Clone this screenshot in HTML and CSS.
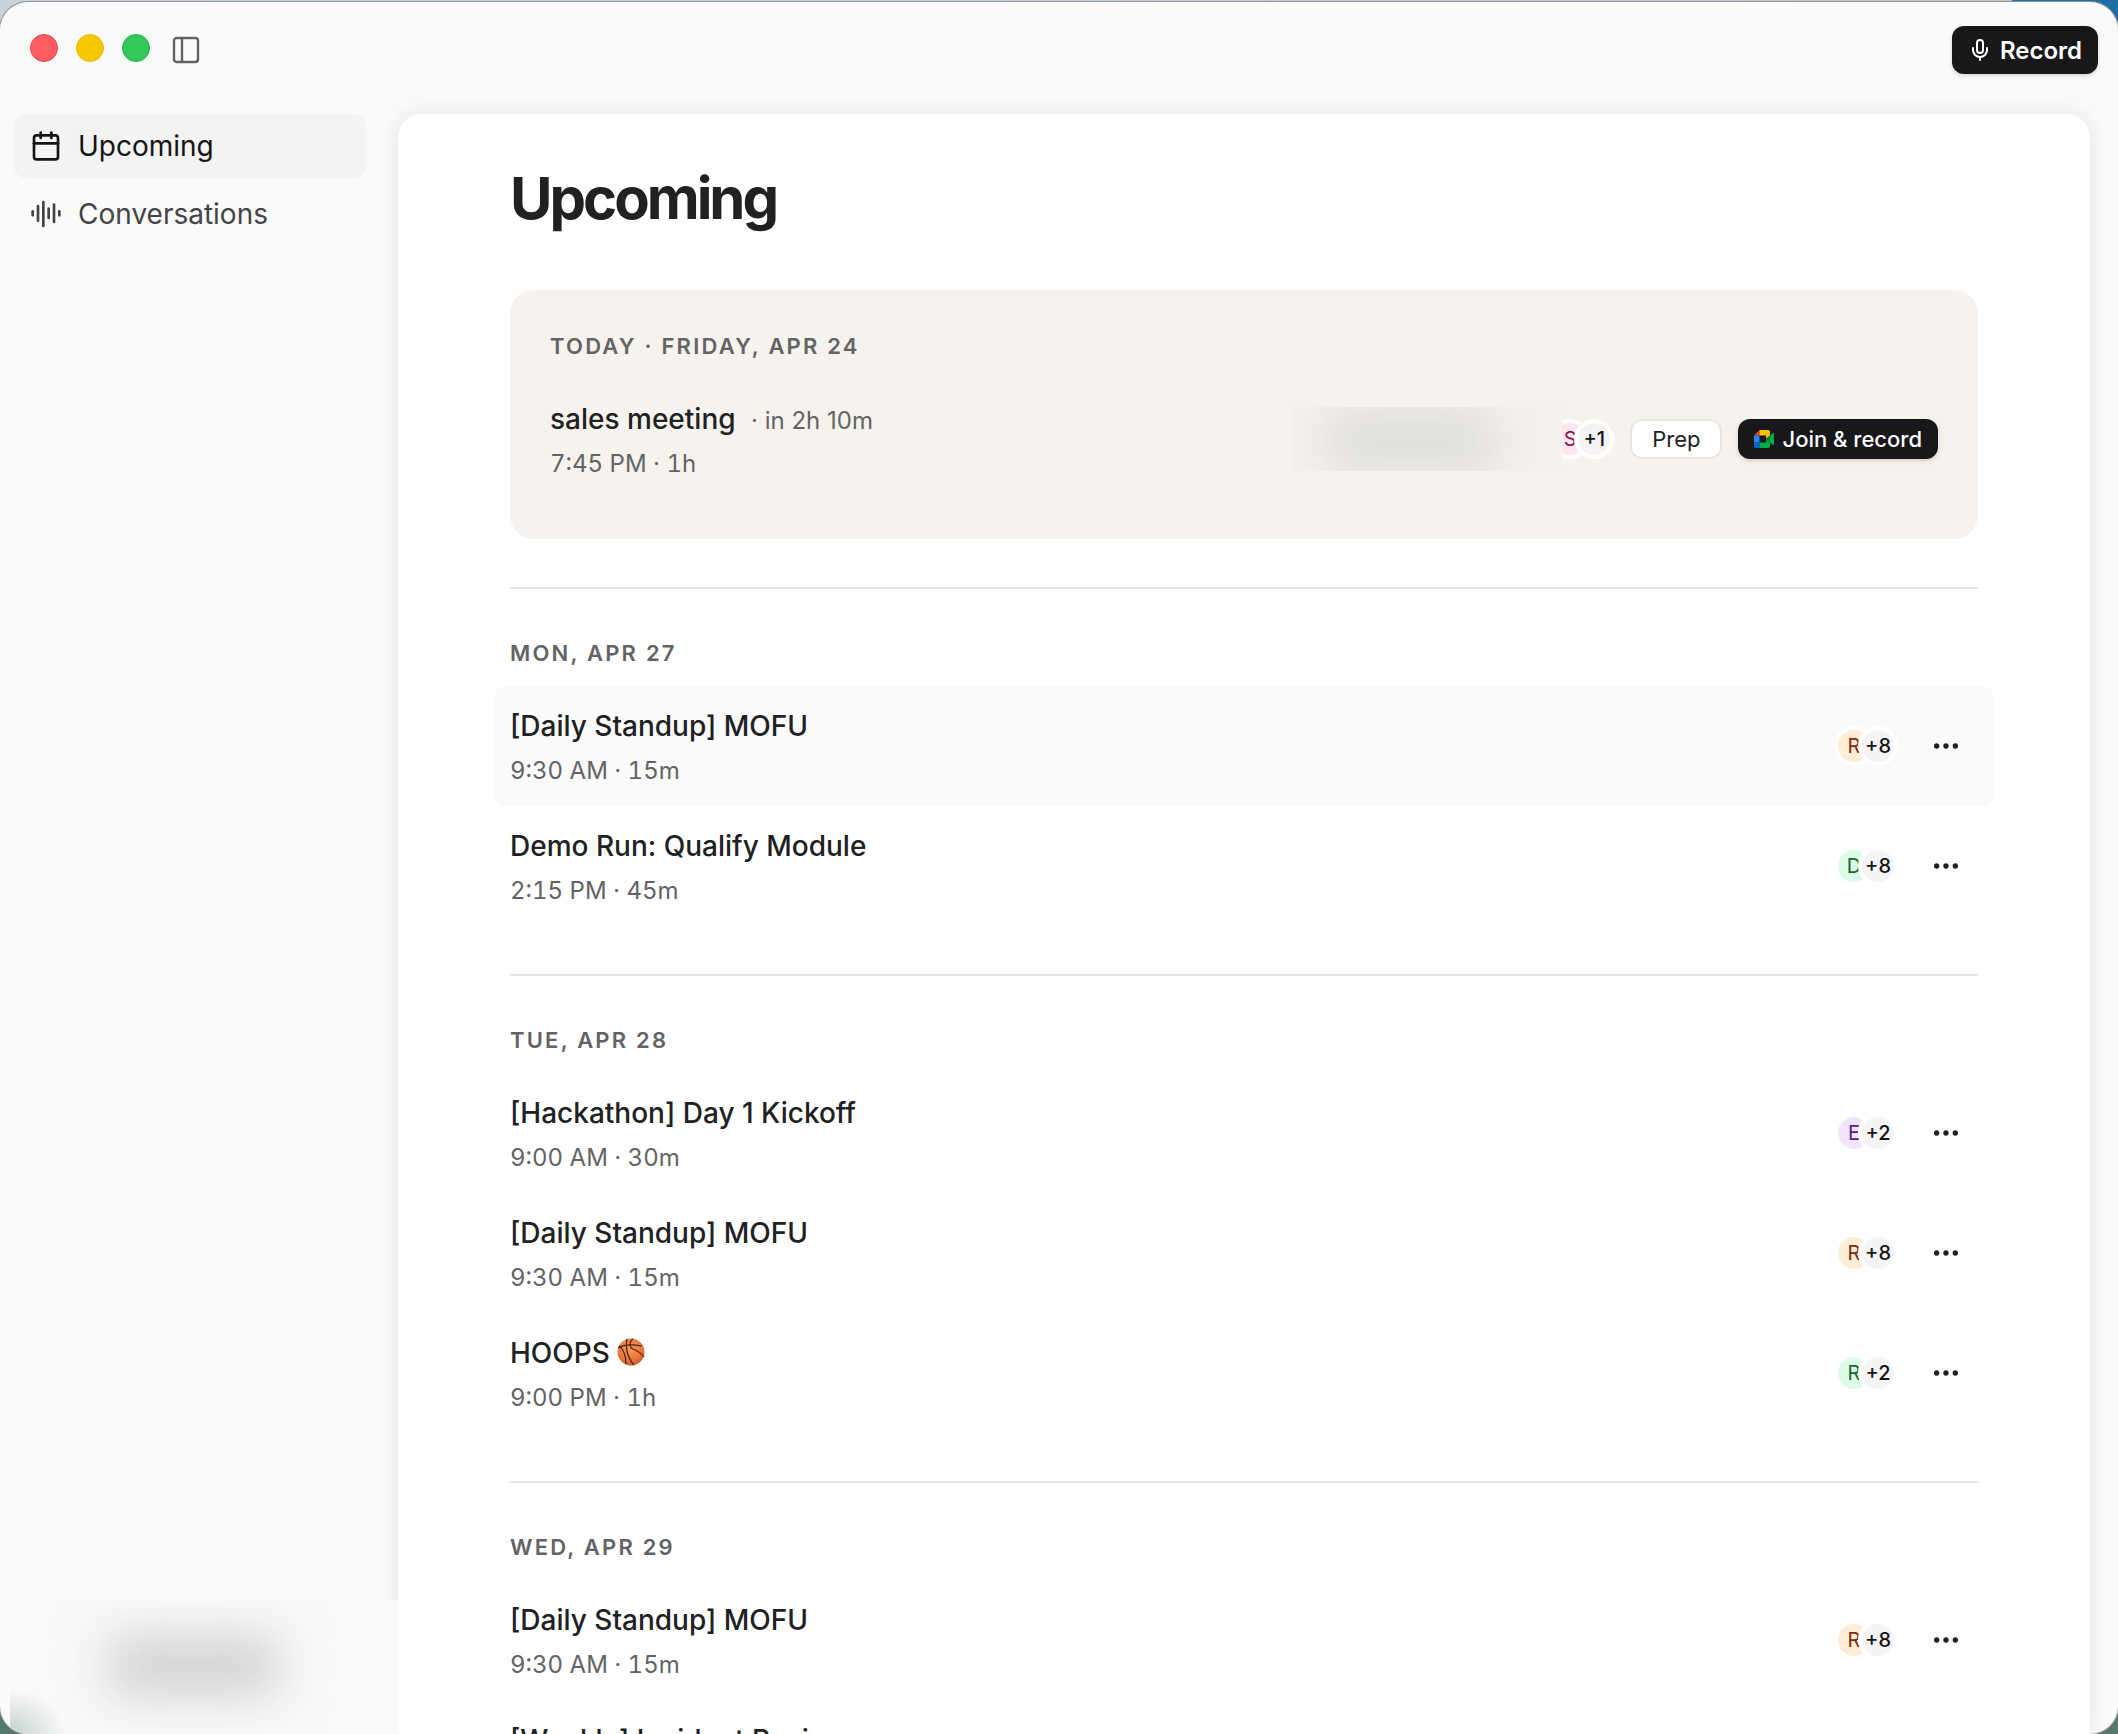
FILE: index.html
```html
<!DOCTYPE html>
<html lang="en">
<head>
    <meta charset="UTF-8">
    <meta name="viewport" content="width=device-width, initial-scale=1.0">
    <title>Upcoming</title>
    <link rel="stylesheet" href="styles.css">
</head>
<body>

<!-- Shared icons -->
<svg class="sprite" aria-hidden="true">
    <symbol id="icon-more" viewBox="0 0 24 24">
        <circle cx="5" cy="12" r="2"/>
        <circle cx="12" cy="12" r="2"/>
        <circle cx="19" cy="12" r="2"/>
    </symbol>
</svg>

<div class="window">

    <!-- Title bar -->
    <header class="titlebar">
        <div class="window-controls">
            <div class="lights">
                <button class="light close" aria-label="Close"></button>
                <button class="light minimize" aria-label="Minimize"></button>
                <button class="light zoom" aria-label="Zoom"></button>
            </div>
            <button class="sidebar-toggle" aria-label="Toggle sidebar">
                <svg class="icon thin" viewBox="0 0 24 24"><rect x="3" y="3" width="18" height="18" rx="2"/><path d="M9 3v18"/></svg>
            </button>
        </div>
        <button class="btn btn-dark btn-record">
            <svg class="icon small" viewBox="0 0 24 24"><path d="M12 19v3"/><path d="M19 10v2a7 7 0 0 1-14 0v-2"/><rect x="9" y="2" width="6" height="13" rx="3"/></svg>
            Record
        </button>
    </header>

    <div class="layout">

        <!-- Sidebar -->
        <aside class="sidebar">
            <nav class="nav">
                <a class="nav-item active" href="#upcoming">
                    <svg class="icon" viewBox="0 0 24 24"><path d="M8 2v4"/><path d="M16 2v4"/><rect x="3" y="4" width="18" height="18" rx="2"/><path d="M3 10h18"/></svg>
                    Upcoming
                </a>
                <a class="nav-item" href="#conversations">
                    <svg class="icon" viewBox="0 0 24 24"><path d="M2 10v3"/><path d="M6 6v11"/><path d="M10 3v18"/><path d="M14 8v7"/><path d="M18 5v13"/><path d="M22 10v3"/></svg>
                    Conversations
                </a>
            </nav>
            <div class="account"></div>
        </aside>

        <!-- Agenda -->
        <main class="panel" id="upcoming">
            <h1>Upcoming</h1>

            <section class="today">
                <h2>TODAY · FRIDAY, APR 24</h2>
                <div class="event">
                    <div class="event-info">
                        <h3>sales meeting <span class="countdown">· in 2h 10m</span></h3>
                        <p>7:45 PM · 1h</p>
                    </div>
                    <div class="event-actions">
                        <div class="people">
                            <span class="guest-name"></span>
                            <span class="avatar pink">S</span>
                            <span class="avatar count">+1</span>
                        </div>
                        <button class="btn btn-light">Prep</button>
                        <button class="btn btn-dark btn-join">
                            <svg class="meet" viewBox="0 0 20 18">
                                <path fill="#ea4335" d="M0 5.500 5.500 0v5.500z"/>
                                <path fill="#fbbc04" d="M5.500 0H14a2 2 0 0 1 2 2v3.500l-4 3.500V5.500H5.500z"/>
                                <path fill="#2684fc" d="M0 5.500h5.500v7H0z"/>
                                <path fill="#0066da" d="M0 12.500h5.500V18H2a2 2 0 0 1-2-2z"/>
                                <path fill="#00ac47" d="M5.500 12.500H12V9l4 3.500V16a2 2 0 0 1-2 2H5.500z"/>
                                <path fill="#00832d" d="M12 9l4-3.500v7z"/>
                                <path fill="#00ac47" d="M16 5.500l2.800-2.300c.5-.4 1.200-.1 1.200.6v10.400c0 .7-.7 1-1.200.6L16 12.500z"/>
                            </svg>
                            Join &amp; record
                        </button>
                    </div>
                </div>
            </section>

            <section class="day">
                <h2>MON, APR 27</h2>
                <div class="event hovered">
                    <div class="event-info">
                        <h3>[Daily Standup] MOFU</h3>
                        <p>9:30 AM · 15m</p>
                    </div>
                    <div class="event-actions">
                        <div class="people"><span class="avatar orange">R</span><span class="avatar count">+8</span></div>
                        <button class="btn-more" aria-label="More"><svg><use href="#icon-more"/></svg></button>
                    </div>
                </div>
                <div class="event">
                    <div class="event-info">
                        <h3>Demo Run: Qualify Module</h3>
                        <p>2:15 PM · 45m</p>
                    </div>
                    <div class="event-actions">
                        <div class="people"><span class="avatar green">D</span><span class="avatar count">+8</span></div>
                        <button class="btn-more" aria-label="More"><svg><use href="#icon-more"/></svg></button>
                    </div>
                </div>
            </section>

            <section class="day">
                <h2>TUE, APR 28</h2>
                <div class="event">
                    <div class="event-info">
                        <h3>[Hackathon] Day 1 Kickoff</h3>
                        <p>9:00 AM · 30m</p>
                    </div>
                    <div class="event-actions">
                        <div class="people"><span class="avatar purple">E</span><span class="avatar count">+2</span></div>
                        <button class="btn-more" aria-label="More"><svg><use href="#icon-more"/></svg></button>
                    </div>
                </div>
                <div class="event">
                    <div class="event-info">
                        <h3>[Daily Standup] MOFU</h3>
                        <p>9:30 AM · 15m</p>
                    </div>
                    <div class="event-actions">
                        <div class="people"><span class="avatar orange">R</span><span class="avatar count">+8</span></div>
                        <button class="btn-more" aria-label="More"><svg><use href="#icon-more"/></svg></button>
                    </div>
                </div>
                <div class="event">
                    <div class="event-info">
                        <h3>HOOPS
                            <svg class="ball" viewBox="0 0 28 28">
                                <defs>
                                    <radialGradient id="ballShade" cx="0.45" cy="0.35" r="0.7">
                                        <stop offset="0" stop-color="#f7995a"/>
                                        <stop offset="0.7" stop-color="#e6733a"/>
                                        <stop offset="1" stop-color="#c24e1c"/>
                                    </radialGradient>
                                </defs>
                                <circle cx="14" cy="14" r="13.500" fill="url(#ballShade)"/>
                                <path fill="none" stroke="#4a2413" stroke-width="1.200" d="M1 10C6 7 14 6 25 8M10 1c-2 8 0 18 7 26M16 1c-4 3-4 8 0 10 5 2 8 4 11 8M2 8c5 4 7 10 7 18"/>
                            </svg>
                        </h3>
                        <p>9:00 PM · 1h</p>
                    </div>
                    <div class="event-actions">
                        <div class="people"><span class="avatar green">R</span><span class="avatar count">+2</span></div>
                        <button class="btn-more" aria-label="More"><svg><use href="#icon-more"/></svg></button>
                    </div>
                </div>
            </section>

            <section class="day">
                <h2>WED, APR 29</h2>
                <div class="event">
                    <div class="event-info">
                        <h3>[Daily Standup] MOFU</h3>
                        <p>9:30 AM · 15m</p>
                    </div>
                    <div class="event-actions">
                        <div class="people"><span class="avatar orange">R</span><span class="avatar count">+8</span></div>
                        <button class="btn-more" aria-label="More"><svg><use href="#icon-more"/></svg></button>
                    </div>
                </div>
                <div class="event">
                    <div class="event-info">
                        <h3>[Weekly] Incident Review</h3>
                        <p></p>
                    </div>
                </div>
            </section>
        </main>
    </div>
</div>

</body>
</html>
```
FILE: styles.css
```css
* {
    box-sizing: border-box;
    margin: 0;
    padding: 0;
}

body {
    font-family: Inter, "Liberation Sans", sans-serif;
    color: #202122;
    height: 100vh;
    overflow: hidden;
    padding-top: 2px;
    background: linear-gradient(90deg, #c9d1da 0, #c3c8cc 95%, #1f6fa5 95%) top / 100% 50% no-repeat #54796a;
}

button {
    font-family: inherit;
    border: none;
    background: none;
    cursor: pointer;
}

h1 {
    font-size: 58px;
    line-height: 72px;
    font-weight: 700;
    letter-spacing: -3px;
    margin-bottom: 56px;
}

h2 {
    font-size: 22px;
    line-height: 33px;
    font-weight: 600;
    letter-spacing: 0.1em;
    color: #636366;
    margin-bottom: 16px;
}

h3 {
    font-size: 28px;
    line-height: 44px;
    font-weight: 500;
    margin-bottom: 5px;
}

.sprite {
    display: none;
}

.icon {
    width: 32px;
    height: 32px;
    fill: none;
    stroke: currentColor;
    stroke-width: 2;
    stroke-linecap: round;
    stroke-linejoin: round;
}

.icon.thin {
    stroke-width: 1.8;
}

.icon.small {
    width: 24px;
    height: 24px;
}

/* Window */
.window {
    display: flex;
    flex-direction: column;
    height: 100%;
    background: #fafafa;
    border-radius: 28px;
    box-shadow: 0 0 0 1px #8f959b;
    overflow: hidden;
}

.titlebar {
    display: flex;
    align-items: center;
    justify-content: space-between;
    flex-shrink: 0;
    height: 96px;
    padding: 0 20px 0 30px;
}

.window-controls {
    display: flex;
    align-items: center;
    gap: 20px;
}

.lights {
    display: flex;
    gap: 18px;
    padding-bottom: 4px;
}

.light {
    width: 28px;
    height: 28px;
    border-radius: 50%;
    border: 1px solid;
}

.close {
    background: #ff5c60;
    border-color: #e8434d;
}

.minimize {
    background: #f9c700;
    border-color: #e8b800;
}

.zoom {
    background: #34c759;
    border-color: #1fb045;
}

.sidebar-toggle {
    display: flex;
    color: #636366;
}

.layout {
    display: flex;
    flex: 1;
    min-height: 0;
    padding: 16px 28px 0 0;
}

/* Buttons */
.btn {
    display: flex;
    align-items: center;
    gap: 8px;
    height: 40px;
    padding: 0 16px;
    border-radius: 12px;
    font-size: 22px;
    font-weight: 500;
    white-space: nowrap;
}

.btn-dark {
    background: #18181b;
    color: #fff;
    box-shadow: 0 2px 4px rgba(0, 0, 0, 0.15);
}

.btn-light {
    background: #fff;
    color: #202122;
    border: 2px solid #e8e7e5;
    padding: 0 20px;
    font-weight: 400;
}

.btn-record {
    height: 48px;
    font-size: 24px;
    font-weight: 600;
}

.btn-more {
    display: flex;
    align-items: center;
    justify-content: center;
    width: 64px;
    height: 64px;
}

.btn-more svg {
    width: 32px;
    height: 32px;
    fill: #202122;
}

.meet {
    width: 20px;
    height: 18px;
}

/* Sidebar */
.sidebar {
    display: flex;
    flex-direction: column;
    justify-content: space-between;
    width: 398px;
    flex-shrink: 0;
}

.nav {
    display: flex;
    flex-direction: column;
    gap: 4px;
    padding: 0 32px 0 14px;
}

.nav-item {
    display: flex;
    align-items: center;
    gap: 16px;
    height: 64px;
    padding: 0 16px;
    border-radius: 12px;
    font-size: 28px;
    color: #444447;
    text-decoration: none;
}

.nav-item.active {
    background: #f3f3f3;
    color: #151517;
}

.account {
    position: relative;
    z-index: 1;
    height: 134px;
    margin-left: 10px;
    background:
        radial-gradient(ellipse 56px 44px at 0 100%, #c5d1cc, transparent),
        #f9f9f9;
    overflow: hidden;
}

.account::before {
    content: "";
    display: block;
    width: 170px;
    height: 60px;
    margin: 36px 0 0 98px;
    background: #d2d2d2;
    filter: blur(24px);
}

/* Main panel */
.panel {
    flex: 1;
    min-width: 0;
    padding: 48px 112px 0;
    background: #fff;
    border-radius: 24px 24px 0 0;
    box-shadow: 0 0 24px rgba(0, 0, 0, 0.09);
    overflow: hidden;
}

.today {
    padding: 40px;
    margin-bottom: 48px;
    background: #f6f3ee;
    border-radius: 24px;
}

.day {
    border-top: 2px solid #e5e5e6;
    padding: 48px 0;
}

.event {
    display: flex;
    align-items: center;
    justify-content: space-between;
    height: 120px;
}

.day .event {
    margin: 0 -16px;
    padding: 0 16px;
    border-radius: 12px;
}

.event.hovered {
    background: #fafafa;
}

.event-info p,
.countdown {
    font-size: 24px;
    line-height: 36px;
    font-weight: 400;
    color: #636366;
}

.event-info p {
    min-height: 36px;
    font-variant-numeric: tabular-nums;
}

.countdown {
    margin-left: 8px;
}

.ball {
    width: 28px;
    height: 28px;
    vertical-align: -3px;
}

.event-actions {
    display: flex;
    align-items: center;
    gap: 16px;
}

/* Attendees */
.people {
    display: flex;
    align-items: center;
}

.avatar {
    display: flex;
    align-items: center;
    justify-content: center;
    width: 40px;
    height: 40px;
    border: 4px solid #fff;
    border-radius: 50%;
    font-size: 20px;
}

.avatar.count {
    margin-left: -16px;
    background: #f4f4f5;
    color: #151517;
    font-weight: 500;
}

.avatar.orange {
    background: #ffecd6;
    color: #7c2d12;
}

.avatar.green {
    background: #dcfce7;
    color: #166534;
}

.avatar.purple {
    background: #f1e5fe;
    color: #581c87;
}

.avatar.pink {
    background: #fce4f3;
    color: #831843;
}

.guest-name {
    z-index: 1;
    width: 270px;
    height: 64px;
    margin-right: -12px;
    background: #f5f2ee;
    overflow: hidden;
}

.guest-name::before {
    content: "";
    display: block;
    width: 170px;
    height: 64px;
    margin: 2px 0 0 34px;
    background: #dedddb;
    filter: blur(24px);
}
```
